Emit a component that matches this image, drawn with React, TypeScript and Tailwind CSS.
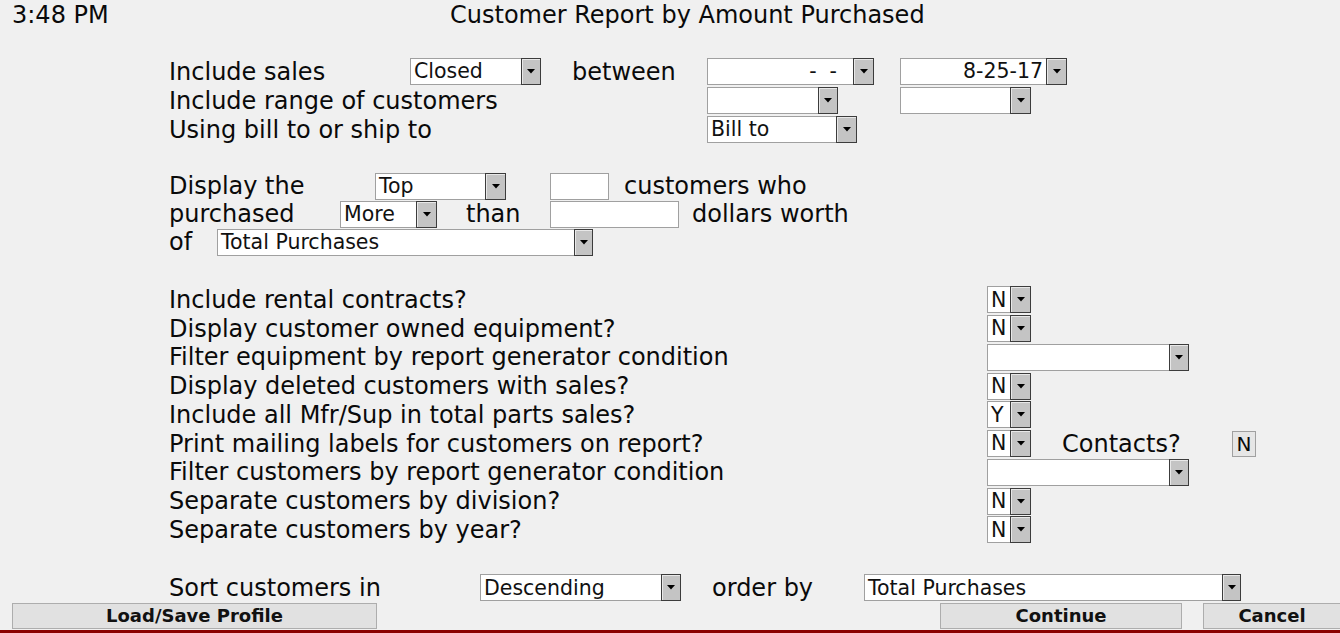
import React from "react";

const Arrow = () => (
  <svg width="8" height="5" viewBox="0 0 8 5">
    <path d="M0 0h8L4 4.5z" fill="#000" />
  </svg>
);

function Sel({
  wc,
  bc = "w-[21px]",
  text = "",
  right = false,
}: {
  wc: string;
  bc?: string;
  text?: string;
  right?: boolean;
}) {
  return (
    <div className="flex h-[27px] shrink-0">
      <div
        className={`${wc} h-full bg-white border border-[#a0a0a0] border-r-0 flex items-center px-[3px] text-[20.5px] leading-none text-[#111] overflow-hidden whitespace-pre ${
          right ? "justify-end" : "justify-start"
        }`}
      >
        {text}
      </div>
      <div
        className={`${bc} h-full bg-[#c4c4c4] border border-[#3c3c3c] shadow-[inset_1px_1px_0_#e8e8e8] flex items-center justify-center`}
      >
        <Arrow />
      </div>
    </div>
  );
}

const Input = ({ wc }: { wc: string }) => (
  <div className={`${wc} h-[27px] bg-white border border-[#a0a0a0] shrink-0`} />
);

export default function App() {
  return (
    <div
      className="w-[1340px] h-[633px] bg-[#f0f0f0] text-[#0a0a0a] flex flex-col overflow-hidden text-[24px] leading-none"
      style={{ fontFamily: "'DejaVu Sans', Verdana, sans-serif" }}
    >
      {/* header */}
      <div className="h-[29px] flex items-center text-[24px] whitespace-nowrap">
        <div className="w-[450px] pl-[12px] shrink-0">3:48 PM</div>
        <div>Customer Report by Amount Purchased</div>
      </div>

      <div className="pl-[169px] flex flex-col mt-[28px] whitespace-nowrap">
        {/* section 1 */}
        <div className="h-[29px] flex items-center">
          <div className="w-[241px] shrink-0">Include sales</div>
          <Sel wc="w-[111px]" bc="w-[20px]" text="Closed" />
          <div className="ml-[31px] w-[135px] shrink-0">between</div>
          <Sel wc="w-[146px]" text={"-  -  "} right />
          <div className="ml-[26px]">
            <Sel wc="w-[146px]" text="8-25-17" right />
          </div>
        </div>
        <div className="h-[29px] flex items-center">
          <div className="w-[538px] shrink-0">Include range of customers</div>
          <Sel wc="w-[111px]" bc="w-[20px]" />
          <div className="ml-[62px]">
            <Sel wc="w-[110px]" />
          </div>
        </div>
        <div className="h-[29px] flex items-center">
          <div className="w-[538px] shrink-0">Using bill to or ship to</div>
          <Sel wc="w-[129px]" text="Bill to" />
        </div>

        {/* section 2 */}
        <div className="h-[28px] flex items-center mt-[28px]">
          <div className="w-[206px] shrink-0">Display the</div>
          <Sel wc="w-[110px]" text="Top" />
          <div className="ml-[44px]">
            <Input wc="w-[59px]" />
          </div>
          <div className="ml-[15px]">customers who</div>
        </div>
        <div className="h-[28px] flex items-center">
          <div className="w-[171px] shrink-0">purchased</div>
          <Sel wc="w-[76px]" text="More" />
          <div className="ml-[29px] w-[84px] shrink-0">than</div>
          <Input wc="w-[129px]" />
          <div className="ml-[13px]">dollars worth</div>
        </div>
        <div className="h-[28px] flex items-center">
          <div className="w-[48px] shrink-0">of</div>
          <Sel wc="w-[357px]" bc="w-[19px]" text="Total Purchases" />
        </div>

        {/* section 3 */}
        <div className="flex flex-col mt-[29.6px]">
          <div className="h-[28.75px] flex items-center">
            <div className="w-[818px] shrink-0">Include rental contracts?</div>
            <Sel wc="w-[23px]" text="N" />
          </div>
          <div className="h-[28.75px] flex items-center">
            <div className="w-[818px] shrink-0">Display customer owned equipment?</div>
            <Sel wc="w-[23px]" text="N" />
          </div>
          <div className="h-[28.75px] flex items-center">
            <div className="w-[818px] shrink-0">Filter equipment by report generator condition</div>
            <Sel wc="w-[182px]" bc="w-[20px]" />
          </div>
          <div className="h-[28.75px] flex items-center">
            <div className="w-[818px] shrink-0">Display deleted customers with sales?</div>
            <Sel wc="w-[23px]" text="N" />
          </div>
          <div className="h-[28.75px] flex items-center">
            <div className="w-[818px] shrink-0">Include all Mfr/Sup in total parts sales?</div>
            <Sel wc="w-[23px]" text="Y" />
          </div>
          <div className="h-[28.75px] flex items-center">
            <div className="w-[818px] shrink-0">Print mailing labels for customers on report?</div>
            <Sel wc="w-[23px]" text="N" />
            <div className="ml-[31px] w-[170px] shrink-0">Contacts?</div>
            <div className="w-[24px] h-[26px] bg-[#e6e6e6] border border-[#a0a0a0] flex items-center justify-center text-[20px]">
              N
            </div>
          </div>
          <div className="h-[28.75px] flex items-center">
            <div className="w-[818px] shrink-0">Filter customers by report generator condition</div>
            <Sel wc="w-[182px]" bc="w-[20px]" />
          </div>
          <div className="h-[28.75px] flex items-center">
            <div className="w-[818px] shrink-0">Separate customers by division?</div>
            <Sel wc="w-[23px]" text="N" />
          </div>
          <div className="h-[28.75px] flex items-center">
            <div className="w-[818px] shrink-0">Separate customers by year?</div>
            <Sel wc="w-[23px]" text="N" />
          </div>
        </div>

        {/* sort */}
        <div className="h-[28px] flex items-center mt-[29.6px]">
          <div className="w-[311px] shrink-0">Sort customers in</div>
          <Sel wc="w-[181px]" bc="w-[20px]" text="Descending" />
          <div className="ml-[31px] w-[152px] shrink-0">order by</div>
          <Sel wc="w-[358px]" bc="w-[19px]" text="Total Purchases" />
        </div>
      </div>

      {/* buttons */}
      <div className="mt-auto flex h-[26px] text-[18px] font-bold text-[#111] whitespace-nowrap">
        <div className="ml-[12px] w-[365px] h-full bg-[#e1e1e1] border border-[#adadad] flex items-center justify-center">
          Load/Save Profile
        </div>
        <div className="ml-[563px] w-[242px] h-full bg-[#e1e1e1] border border-[#adadad] flex items-center justify-center">
          Continue
        </div>
        <div className="ml-[21px] flex-1 h-full bg-[#e1e1e1] border border-[#adadad] border-r-0 flex items-center justify-center">
          Cancel
        </div>
      </div>
      <div className="mt-[1px] h-[3px] bg-[#8b0000] shrink-0" />
    </div>
  );
}
